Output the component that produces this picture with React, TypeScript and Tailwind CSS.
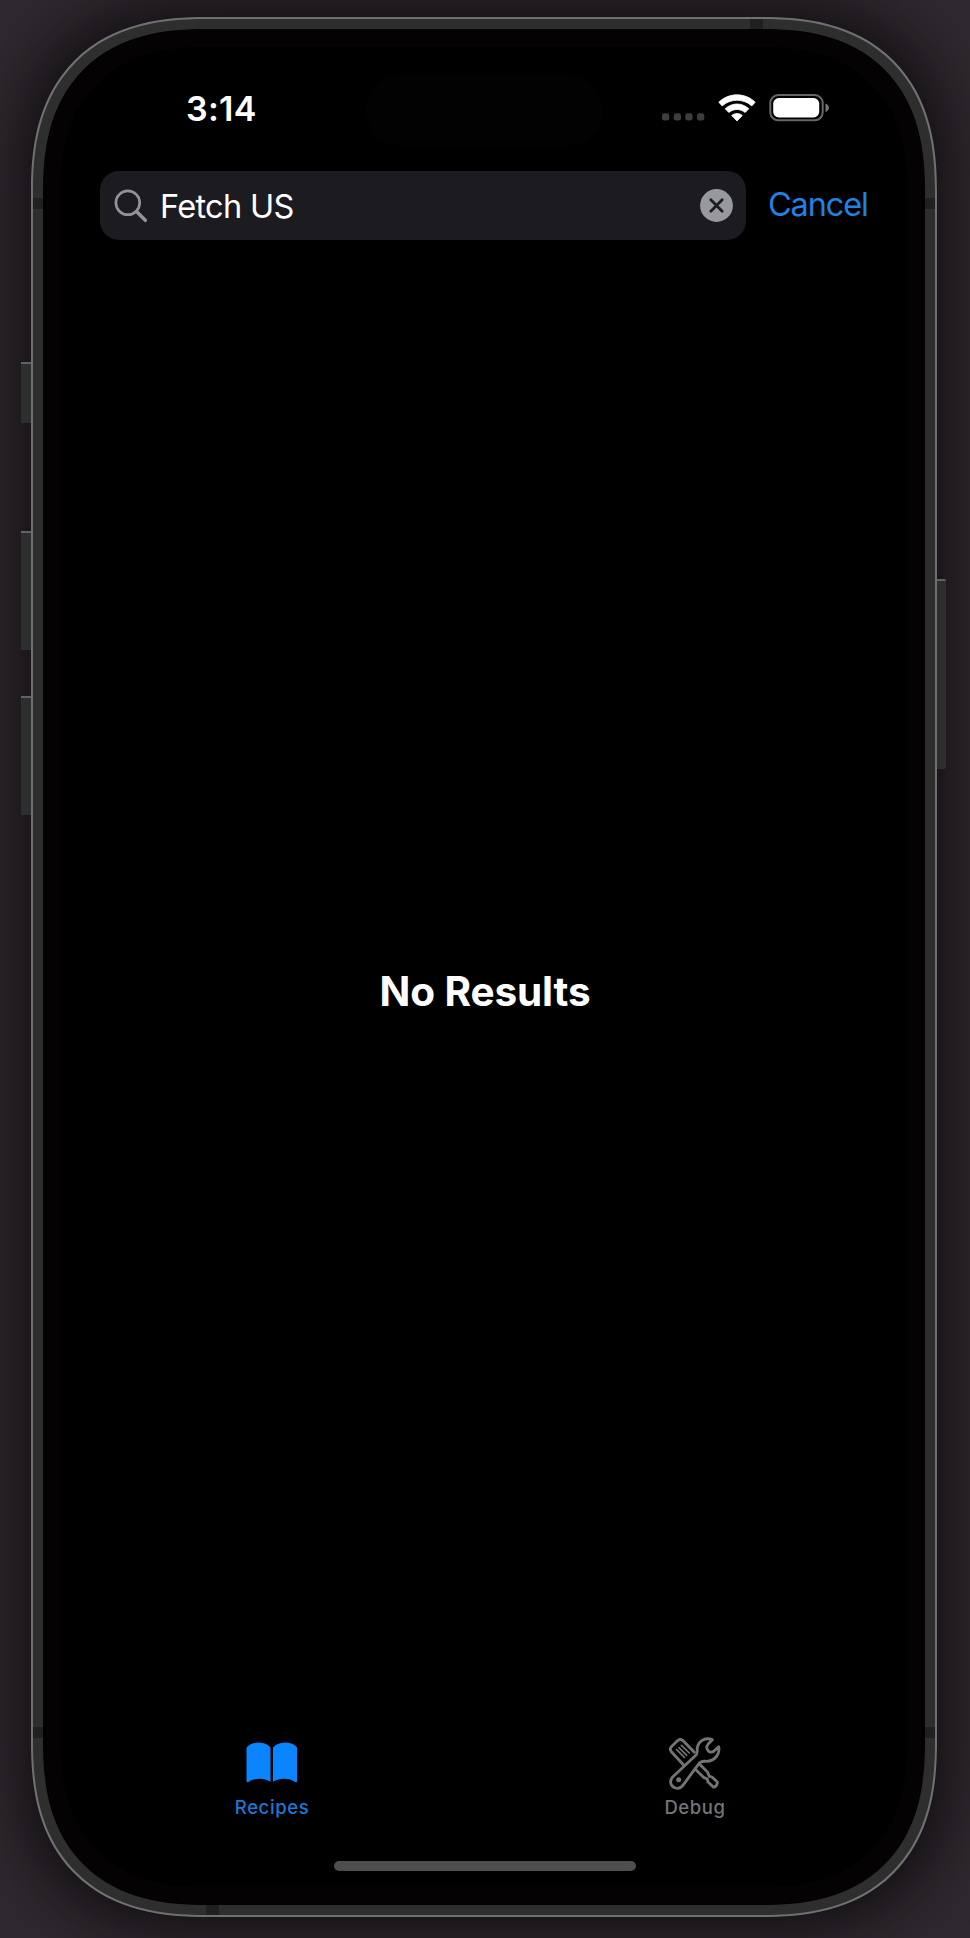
import React from "react";

function StatusIcons() {
  return (
    <div className="flex items-center">
      <svg width="44" height="8" viewBox="0 0 44 8" className="mt-[18px]">
        {[0, 11.7, 23.3, 35].map((x) => (
          <rect key={x} x={x} y="0.3" width="7.3" height="7.3" rx="2.4" fill="#3d3d3d" />
        ))}
      </svg>
      <svg width="38" height="28" viewBox="0 0 38 28" className="ml-[12px]">
        <path d="M0.8 8.2C11 -1.6 27 -1.6 37.2 8.2L33.8 11.9C25.6 4.4 12.4 4.4 4.2 11.9Z" fill="#fff" stroke="#fff" strokeWidth="0.8" strokeLinejoin="round" />
        <path d="M7.2 14.8C14 8.4 24 8.4 30.8 14.8L27.1 18.5C22.4 14.5 15.6 14.5 10.9 18.5Z" fill="#fff" stroke="#fff" strokeWidth="0.8" strokeLinejoin="round" />
        <path d="M13.7 21.5C16.8 18.8 21.2 18.8 24.3 21.5L19 27Z" fill="#fff" stroke="#fff" strokeWidth="0.8" strokeLinejoin="round" />
      </svg>
      <svg width="61" height="28" viewBox="0 0 61 28" className="ml-[13px]">
        <rect x="1.3" y="1.1" width="52.4" height="25.2" rx="8" fill="none" stroke="#666" strokeWidth="2" />
        <rect x="4.2" y="4" width="46" height="19.4" rx="5.6" fill="#fff" />
        <path d="M56.5 9.4C61 11.2 61 16.2 56.5 18Z" fill="#777" />
      </svg>
    </div>
  );
}

function BookIcon() {
  return (
    <svg width="52" height="41" viewBox="0 0 52 41" fill="#0a84ff">
      <path d="M0.5 5.5C6-1.2 19-1.2 24.5 5.5V39.8C18 35.8 8 35.8 2 40.2Q0.5 40.5 0.5 39Z" />
      <path d="M27 5.5C33-1.2 46-1.2 51 5.5V39Q51 40.5 49.5 40.2C43.5 35.8 33.5 35.8 27 39.8Z" />
    </svg>
  );
}

function ToolsIcon() {
  return (
    <svg width="54" height="54" viewBox="85 47 162 162" fill="none" stroke="#747474" strokeWidth="8.5" strokeLinejoin="round" strokeLinecap="round">
      <path d="M132 134L95 94Q89 86 95 79L115 60Q122 55 129 60L164 96" />
      <path d="M111 88L134 111M118 82L141 105M125 75L149 98" strokeWidth="5" />
      <path d="M218 58C198 50 177 61 173 82C172 92 174 98 170 103L99 170C88 182 93 199 107 203C120 207 127 200 132 192L176 132C184 120 191 123 200 123C225 123 242 101 237 79L223 92C215 98 208 96 204 89C199 82 200 78 205 72Z" />
      <circle cx="117" cy="178" r="7.5" fill="#747474" stroke="none" />
      <path d="M180 132L204 156L209 168L217 170L232 184Q236 192 225 200H221L205 185L203 176L193 172L167 147" />
    </svg>
  );
}

function SearchBar() {
  return (
    <div className="ml-[57px] mt-[26px] flex h-[69px] flex-none items-center">
      <div className="flex h-[69px] w-[646px] items-center rounded-[19px] bg-[#1c1b20] pl-[14px] pr-[13px]">
        <svg width="34" height="34" viewBox="0 0 34 34" fill="none" stroke="#929297" strokeLinecap="round">
          <circle cx="13.8" cy="13.8" r="11.9" strokeWidth="2.7" />
          <path d="M23 23L31.3 31.3" strokeWidth="3.6" />
        </svg>
        <span className="ml-[12px] mt-[3px] text-[32.5px] leading-[40px] tracking-[-0.68px] text-white">Fetch US</span>
        <svg width="33" height="33" viewBox="0 0 33 33" className="ml-auto">
          <circle cx="16.5" cy="16.5" r="16.4" fill="#98989f" />
          <path d="M10.8 10.8L22.2 22.2M22.2 10.8L10.8 22.2" stroke="#1c1c1f" strokeWidth="2.8" strokeLinecap="round" />
        </svg>
      </div>
      <span className="-mt-[2px] ml-[22px] text-[32.5px] leading-[40px] tracking-[-1.15px] text-[#1f82e6]">Cancel</span>
    </div>
  );
}

function TabBar() {
  return (
    <nav className="flex h-[128px] flex-none text-[18.5px] font-medium leading-[24px] tracking-[0.6px]">
      <div className="flex w-[458px] flex-col items-center">
        <div className="flex h-[62px] items-start pt-[9px]">
          <BookIcon />
        </div>
        <span className="text-[#1b78d8]">Recipes</span>
      </div>
      <div className="flex w-[388px] flex-col items-center">
        <div className="flex h-[62px] items-start pt-[3px]">
          <ToolsIcon />
        </div>
        <span className="text-[#757575]">Debug</span>
      </div>
    </nav>
  );
}

export default function App() {
  return (
    <div className="relative h-[1938px] w-[970px] overflow-hidden bg-[#2e292e] px-[31px] pt-[17px] font-['Inter',sans-serif]">
      <div className="relative h-[1900px] w-[906px] rounded-[175px] border-2 border-[#707070] bg-[#2f2e2f] p-[10px] [box-shadow:0_0_56px_14px_rgba(10,6,10,0.72)] [corner-shape:superellipse(1.28)]">
        <div className="absolute left-[717px] top-0 h-[11px] w-[13px] bg-[#212021]" />
        <div className="absolute bottom-0 left-[173px] h-[11px] w-[13px] bg-[#212021]" />
        <div className="absolute left-0 top-[179px] h-[11px] w-full bg-[#212021]" />
        <div className="absolute left-0 top-[1708px] h-[11px] w-full bg-[#212021]" />

        <div className="relative h-full w-full rounded-[163px] bg-[#040203] p-[18px] [corner-shape:superellipse(1.28)]">
          <div className="h-full w-full rounded-[146px] bg-black [corner-shape:superellipse(1.28)]" />
          <div className="absolute inset-0 flex flex-col">
            <div className="flex h-[116px] flex-none items-start pt-[45px]">
              <span className="ml-[143px] mt-[15px] w-[180px] text-[34px] font-semibold leading-[40px] tracking-[0.3px] text-white">3:14</span>
              <div className="h-[72px] w-[237px] rounded-full bg-[#020202]" />
              <div className="ml-[59px] mt-[20px]">
                <StatusIcons />
              </div>
            </div>
            <SearchBar />
            <div className="flex h-[1493px] flex-none items-center justify-center pl-[2px] pt-[10px]">
              <h1 className="text-[40.5px] font-bold leading-[50px] tracking-[-0.1px] text-white">No Results</h1>
            </div>
            <TabBar />
            <div className="ml-[291px] h-[10px] w-[302px] flex-none rounded-full bg-[#4e4e4e]" />
          </div>
        </div>
      </div>

      <div className="absolute left-[21px] top-[362px] h-[61px] w-[10px] border-t-2 border-[#626262] bg-[#2d2e2e]" />
      <div className="absolute left-[21px] top-[531px] h-[119px] w-[10px] border-t-2 border-[#626262] bg-[#2d2e2e]" />
      <div className="absolute left-[21px] top-[696px] h-[119px] w-[10px] border-t-2 border-[#626262] bg-[#2d2e2e]" />
      <div className="absolute left-[937px] top-[579px] h-[190px] w-[9px] rounded-r-[2px] border-t-2 border-[#626262] bg-[#2d2e2e]" />
    </div>
  );
}
